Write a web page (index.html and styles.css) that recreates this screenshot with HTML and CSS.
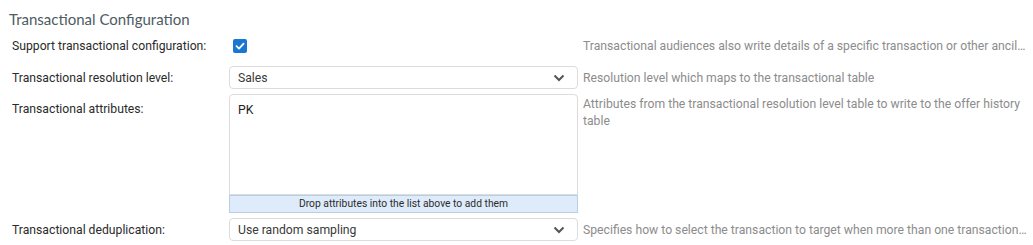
FILE: index.html
```html
<!DOCTYPE html>
<html lang="en">
<head>
    <meta charset="UTF-8">
    <title>Transactional Configuration</title>
    <link rel="stylesheet" href="styles.css">
</head>
<body>
    <div class="section">
        <h2 class="section-title">Transactional Configuration</h2>

        <div class="row row-check">
            <label class="field-label">Support transactional configuration:</label>
            <div class="field-control">
                <span class="checkbox">
                    <svg width="10" height="10" viewBox="0 0 10 10"><polyline points="1.5,5.2 4,7.6 8.6,2.6" fill="none" stroke="#fff" stroke-width="1.8" stroke-linecap="round" stroke-linejoin="round"/></svg>
                </span>
            </div>
            <div class="field-help">Transactional audiences also write details of a specific transaction or other ancillary information to the offer history</div>
        </div>

        <div class="row">
            <label class="field-label">Transactional resolution level:</label>
            <div class="field-control">
                <div class="select">
                    <span>Sales</span>
                    <svg class="chevron" width="12" height="8" viewBox="0 0 12 8"><polyline points="1.5,1.5 6,6 10.5,1.5" fill="none" stroke="#555" stroke-width="2"/></svg>
                </div>
            </div>
            <div class="field-help">Resolution level which maps to the transactional table</div>
        </div>

        <div class="row row-top">
            <label class="field-label">Transactional attributes:</label>
            <div class="field-control">
                <div class="attr-list">
                    <div class="attr-item">PK</div>
                </div>
                <div class="drop-hint">Drop attributes into the list above to add them</div>
            </div>
            <div class="field-help wrap">Attributes from the transactional resolution level table to write to the offer history table</div>
        </div>

        <div class="row">
            <label class="field-label">Transactional deduplication:</label>
            <div class="field-control">
                <div class="select">
                    <span>Use random sampling</span>
                    <svg class="chevron" width="12" height="8" viewBox="0 0 12 8"><polyline points="1.5,1.5 6,6 10.5,1.5" fill="none" stroke="#555" stroke-width="2"/></svg>
                </div>
            </div>
            <div class="field-help">Specifies how to select the transaction to target when more than one transaction matches</div>
        </div>
    </div>
</body>
</html>
```

FILE: styles.css
```css
body {
    margin: 0;
    background: #fff;
    font-family: Roboto, "Liberation Sans", sans-serif;
    color: #333;
}

.section {
    padding: 8px 5px 0 9px;
}

.section-title {
    margin: 0 0 4px 0;
    font-family: Lato, "Open Sans", sans-serif;
    font-weight: 400;
    font-size: 15px;
    line-height: 22px;
    color: #4d5b63;
}

.row {
    display: flex;
    align-items: center;
    margin-top: 5px;
}

.row-check {
    margin-top: 0;
    height: 23px;
    margin-bottom: 9px;
}

.row-top {
    align-items: flex-start;
}

.field-label {
    width: 217px;
    padding-left: 3px;
    flex-shrink: 0;
    font-size: 12.2px;
    color: #2b2b2b;
}

.row-top .field-label {
    padding-top: 8px;
}

.field-control {
    width: 349px;
    flex-shrink: 0;
}

.field-help {
    margin-left: 5px;
    flex: 1;
    min-width: 0;
    font-size: 12.2px;
    color: #8c8c8c;
    white-space: nowrap;
    overflow: hidden;
    text-overflow: ellipsis;
}

.field-help.wrap {
    white-space: normal;
    line-height: 17px;
    padding-top: 2px;
}

.checkbox {
    display: flex;
    align-items: center;
    justify-content: center;
    width: 14px;
    height: 14px;
    margin-left: 4px;
    background: #1976d2;
    border-radius: 2px;
}

.select {
    display: flex;
    align-items: center;
    justify-content: space-between;
    height: 23px;
    box-sizing: border-box;
    padding: 0 12px 0 8px;
    border: 1px solid #dcdcdc;
    border-radius: 4px;
    font-size: 12.2px;
    color: #3a3a3a;
}

.attr-list {
    height: 101px;
    box-sizing: border-box;
    border: 1px solid #dcdcdc;
    border-radius: 4px 4px 0 0;
    padding: 8px 8px;
}

.attr-item {
    font-size: 12.2px;
    color: #222;
}

.drop-hint {
    height: 18px;
    box-sizing: border-box;
    background: #deebfa;
    border: 1px solid #b9cde3;
    font-size: 10.3px;
    line-height: 16px;
    text-align: center;
    color: #2b2b2b;
}
```
